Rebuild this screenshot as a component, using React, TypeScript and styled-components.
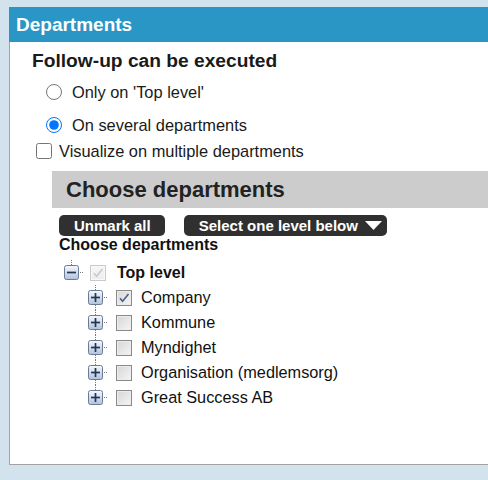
import React from 'react';
import styled, { createGlobalStyle } from 'styled-components';

const GlobalStyle = createGlobalStyle`
  html, body {
    margin: 0;
    padding: 0;
    background: #d3e3ee;
    overflow: hidden;
  }
  body {
    font-family: "Liberation Sans", Arial, sans-serif;
    color: #1a1a1a;
  }
`;

const Page = styled.div`
  padding: 7px 0 0 9px;
  height: 480px;
  box-sizing: border-box;
`;

const Panel = styled.div`
  width: 560px;
  height: 458px;
  box-sizing: border-box;
  background: #fff;
  border-left: 1px solid #a3a3a3;
  border-bottom: 1px solid #a3a3a3;
`;

const PanelHeader = styled.div`
  margin-left: -1px;
  height: 35px;
  line-height: 35px;
  padding-left: 7px;
  background: #2996c6;
  color: #fff;
  font-weight: bold;
  font-size: 19px;
`;

const Body = styled.div`
  padding-top: 7px;
`;

const Title = styled.div`
  margin-left: 22px;
  font-size: 19.2px;
  line-height: 23px;
  font-weight: bold;
`;

const OptionRow = styled.label<{ $indent: number; $gap: number; $top: number }>`
  display: flex;
  align-items: center;
  height: 24px;
  margin-top: ${p => p.$top}px;
  padding-left: ${p => p.$indent}px;
  gap: ${p => p.$gap}px;
  font-size: 16.4px;
  line-height: 20px;

  input {
    margin: 0;
    width: 16px;
    height: 16px;
  }
`;

const SubSection = styled.div`
  margin-left: 42px;
  margin-top: 8px;
`;

const GrayBar = styled.div`
  height: 37px;
  line-height: 37px;
  background: #cccccc;
  padding-left: 14px;
  font-size: 22px;
  font-weight: bold;
  color: #222;
`;

const Toolbar = styled.div`
  display: flex;
  gap: 19px;
  margin: 7px 0 0 7px;
`;

const DarkButton = styled.button<{ $menu?: boolean }>`
  display: flex;
  align-items: center;
  gap: 7px;
  height: 21px;
  padding: 0 ${p => (p.$menu ? 5 : 14)}px 0 15px;
  border: none;
  border-radius: 5px;
  background: #303030;
  color: #fff;
  font-family: "Liberation Sans", Arial, sans-serif;
  font-weight: bold;
  font-size: 15px;
`;

const Label = styled.div`
  margin-left: 7px;
  font-size: 16px;
  line-height: 17px;
  font-weight: bold;
  color: #111;
`;

const Tree = styled.div`
  margin: 7px 0 0 12px;
`;

const TreeRow = styled.div<{ $child?: boolean }>`
  display: flex;
  align-items: center;
  height: 25px;
  margin-left: ${p => (p.$child ? 24 : 0)}px;
  font-size: 16.3px;
  color: #111;
`;

const dots = 'repeating-linear-gradient(to bottom, #777 0 1px, transparent 1px 2px)';

const Expander = styled.span<{ $line: 'top' | 'through' | 'end' }>`
  display: flex;
  align-items: center;
  height: 25px;
  background-image: ${dots};
  background-repeat: no-repeat;
  background-position: 7px 0;
  background-size: ${p =>
    p.$line === 'through' ? '1px 25px' : p.$line === 'end' ? '1px 12px' : '1px 5px'};

  svg {
    display: block;
  }

  &::after {
    content: '';
    width: 4px;
    height: 1px;
    margin-left: 1px;
    background: repeating-linear-gradient(to right, #777 0 1px, transparent 1px 2px);
  }
`;

const CheckBox = styled.span<{ $disabled?: boolean; $left: number; $gap: number }>`
  display: inline-flex;
  align-items: center;
  justify-content: center;
  width: 16px;
  height: 16px;
  box-sizing: border-box;
  margin: 0 ${p => p.$gap}px 0 ${p => p.$left}px;
  border: 1px solid ${p => (p.$disabled ? '#cacaca' : '#8a8a8a')};
  background: ${p =>
    p.$disabled
      ? 'linear-gradient(#f6f6f6, #ececec)'
      : 'linear-gradient(135deg, #d6d6d6, #f5f5f5)'};
  box-shadow: inset 0 0 0 1px ${p => (p.$disabled ? '#f8f8f8' : '#ececec')};
`;

const NodeText = styled.span<{ $bold?: boolean }>`
  font-weight: ${p => (p.$bold ? 'bold' : 'normal')};
  font-size: ${p => (p.$bold ? '16px' : 'inherit')};
`;

const ToggleIcon = ({ open }: { open?: boolean }) => (
  <svg width="15" height="15" viewBox="0 0 15 15">
    <defs>
      <linearGradient id={open ? 'tgMinus' : 'tgPlus'} x1="0" y1="0" x2="0" y2="1">
        <stop offset="0" stopColor="#f7f9fc" />
        <stop offset="1" stopColor="#b2c2d9" />
      </linearGradient>
    </defs>
    <rect x="0.5" y="0.5" width="14" height="14" rx="2" fill={`url(#${open ? 'tgMinus' : 'tgPlus'})`} stroke="#687c9a" />
    <path d="M3 7.5h9" stroke="#1f3654" strokeWidth="1.7" />
    {!open && <path d="M7.5 3v9" stroke="#1f3654" strokeWidth="1.7" />}
  </svg>
);

const Check = ({ color }: { color: string }) => (
  <svg width="12" height="12" viewBox="0 0 12 12">
    <path d="M2 6.2l2.6 3L10.5 2" fill="none" stroke={color} strokeWidth="1.6" />
  </svg>
);

const children = ['Company', 'Kommune', 'Myndighet', 'Organisation (medlemsorg)', 'Great Success AB'];

export default function App() {
  return (
    <>
      <GlobalStyle />
      <Page>
        <Panel>
          <PanelHeader>Departments</PanelHeader>
          <Body>
            <Title>Follow-up can be executed</Title>
            <OptionRow $indent={36} $gap={10} $top={8}>
              <input type="radio" name="scope" />
              Only on 'Top level'
            </OptionRow>
            <OptionRow $indent={36} $gap={10} $top={9}>
              <input type="radio" name="scope" defaultChecked />
              On several departments
            </OptionRow>
            <OptionRow $indent={26} $gap={7} $top={2}>
              <input type="checkbox" />
              Visualize on multiple departments
            </OptionRow>
            <SubSection>
              <GrayBar>Choose departments</GrayBar>
              <Toolbar>
                <DarkButton>Unmark all</DarkButton>
                <DarkButton $menu>
                  Select one level below
                  <svg width="17" height="9" viewBox="0 0 17 9">
                    <path d="M0 0h17L8.5 9z" fill="#fff" />
                  </svg>
                </DarkButton>
              </Toolbar>
              <Label>Choose departments</Label>
              <Tree>
                <TreeRow>
                  <Expander $line="top">
                    <ToggleIcon open />
                  </Expander>
                  <CheckBox $disabled $left={6} $gap={11}>
                    <Check color="#c3cad6" />
                  </CheckBox>
                  <NodeText $bold>Top level</NodeText>
                </TreeRow>
                {children.map((name, i) => (
                  <TreeRow key={name} $child>
                    <Expander $line={i === children.length - 1 ? 'end' : 'through'}>
                      <ToggleIcon />
                    </Expander>
                    <CheckBox $left={8} $gap={9}>
                      {i === 0 && <Check color="#4c5e8e" />}
                    </CheckBox>
                    <NodeText>{name}</NodeText>
                  </TreeRow>
                ))}
              </Tree>
            </SubSection>
          </Body>
        </Panel>
      </Page>
    </>
  );
}
